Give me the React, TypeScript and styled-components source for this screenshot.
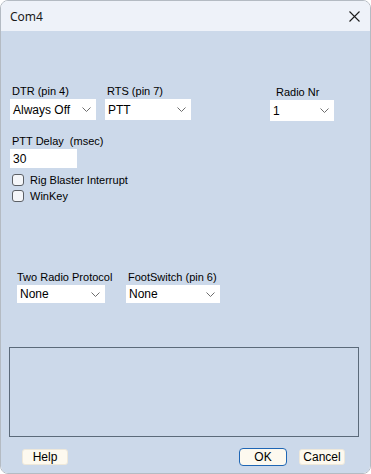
import React from 'react';
import styled, {createGlobalStyle} from 'styled-components';

const GlobalStyle = createGlobalStyle`
    html, body {
        margin: 0;
        padding: 0;
        background: #ffffff;
    }

    * {
        box-sizing: border-box;
    }
`;

type SelectProps = {
    label: string;
    value: string;
    width: number;
    height?: number;
    indent?: number;
};

const Chevron = () => (
    <svg width="9" height="5" viewBox="0 0 9 5">
        <path d="M0.5 0.5 L4.5 4.5 L8.5 0.5" fill="none" stroke="#6d6d6d" strokeWidth="1"/>
    </svg>
);

const CloseIcon = () => (
    <svg width="11" height="11" viewBox="0 0 11 11">
        <path d="M0.5 0.5 L10.5 10.5 M10.5 0.5 L0.5 10.5" stroke="#1c1c1c" strokeWidth="1.1"/>
    </svg>
);

// label on top, fake combo box below
const Dropdown = ({label, value, width, height = 21, indent = 2}: SelectProps) => (
    <Field $width={width}>
        <Label $indent={indent}>{label}</Label>
        <SelectBox $height={height}>
            <span>{value}</span>
            <Chevron/>
        </SelectBox>
    </Field>
);

const CheckItem = ({label}: {label: string}) => (
    <CheckRow>
        <CheckBox/>
        <span>{label}</span>
    </CheckRow>
);

const App = () => (
    <>
        <GlobalStyle/>
        <Window>
            <TitleBar>
                <Title>Com4</Title>
                <CloseButton>
                    <CloseIcon/>
                </CloseButton>
            </TitleBar>

            <Body>
                <TopRow>
                    <Dropdown label="DTR (pin 4)" value="Always Off" width={86}/>
                    <Dropdown label="RTS (pin 7)" value="PTT" width={86}/>
                    <RadioSlot>
                        <Dropdown label="Radio Nr" value="1" width={64} indent={6}/>
                    </RadioSlot>
                </TopRow>

                <DelayField>
                    <Label>PTT Delay&nbsp; (msec)</Label>
                    <DelayInput defaultValue="30"/>
                </DelayField>

                <Checks>
                    <CheckItem label="Rig Blaster Interrupt"/>
                    <CheckItem label="WinKey"/>
                </Checks>

                <BottomRow>
                    <Dropdown label="Two Radio Protocol" value="None" width={88} height={18} indent={0}/>
                    <Dropdown label="FootSwitch (pin 6)" value="None" width={94} height={18}/>
                </BottomRow>

                <GroupBox/>

                <ButtonRow>
                    <Button>Help</Button>
                    <Spacer/>
                    <Button $primary>OK</Button>
                    <Button>Cancel</Button>
                </ButtonRow>
            </Body>
        </Window>
    </>
);

export default App;

const Window = styled.div`
    width: 371px;
    height: 474px;
    display: flex;
    flex-direction: column;
    border: 1px solid #b4bbc3;
    border-radius: 8px;
    overflow: hidden;
    font-family: "Liberation Sans", Arial, sans-serif;
    color: #000;
`;

const TitleBar = styled.div`
    height: 30px;
    flex-shrink: 0;
    display: flex;
    align-items: center;
    justify-content: space-between;
    padding: 0 9px 0 9px;
    background: #eef2f9;
`;

const Title = styled.span`
    font-family: "Noto Sans", "Open Sans", sans-serif;
    font-size: 12px;
    color: #1a1a1a;
`;

const CloseButton = styled.div`
    width: 14px;
    height: 14px;
    display: flex;
    align-items: center;
    justify-content: center;
`;

const Body = styled.div`
    flex: 1;
    display: flex;
    flex-direction: column;
    padding: 54px 11px 0 9px;
    background: #ccd9ea;
`;

const TopRow = styled.div`
    display: flex;
    align-items: flex-start;
    gap: 9px;
`;

const RadioSlot = styled.div`
    margin: 1px 0 -1px 70px;
`;

const BottomRow = styled.div`
    display: flex;
    gap: 21px;
    margin: 68px 0 0 7px;
`;

const Field = styled.div<{$width?: number}>`
    display: flex;
    flex-direction: column;
    gap: 1px;
    width: ${(p) => (p.$width ? `${p.$width}px` : 'auto')};
    flex-shrink: 0;
`;

const DelayField = styled(Field)`
    margin-top: 15px;
`;

const Label = styled.span<{$indent?: number}>`
    font-size: 11px;
    line-height: 13px;
    padding-left: ${(p) => (p.$indent ?? 2)}px;
    white-space: nowrap;
`;

const SelectBox = styled.div<{$height: number}>`
    width: 100%;
    height: ${(p) => p.$height}px;
    display: flex;
    align-items: center;
    justify-content: space-between;
    padding: 0 5px 0 3px;
    background: #ffffff;
    font-size: 12px;
`;

const DelayInput = styled.input`
    width: 67px;
    height: 19px;
    border: none;
    outline: none;
    padding: 0 3px;
    background: #ffffff;
    font-family: "Liberation Sans", Arial, sans-serif;
    font-size: 12px;
    color: #000;
`;

const Checks = styled.div`
    display: flex;
    flex-direction: column;
    gap: 2px;
    margin-top: 5px;
    padding-left: 2px;
`;

const CheckRow = styled.label`
    height: 14px;
    display: flex;
    align-items: center;
    gap: 6px;
    font-size: 11px;
`;

const CheckBox = styled.span`
    width: 12px;
    height: 12px;
    border: 1px solid #5c6066;
    border-radius: 3px;
    background: #f4f6f9;
`;

const GroupBox = styled.div`
    width: 350px;
    height: 90px;
    margin: 44px 0 0 -1px;
    border: 1px solid #5b6a7a;
`;

const ButtonRow = styled.div`
    height: 18px;
    display: flex;
    align-items: center;
    gap: 12px;
    margin-top: 11px;
    padding: 0 14px 0 12px;
`;

const Spacer = styled.div`
    flex: 1;
`;

const Button = styled.button<{$primary?: boolean}>`
    width: ${(p) => (p.$primary ? 48 : 46)}px;
    height: ${(p) => (p.$primary ? 18 : 16)}px;
    padding: 0;
    border: ${(p) => (p.$primary ? '1.5px solid #1f66b5' : '1px solid #eee8da')};
    border-radius: ${(p) => (p.$primary ? 4 : 3)}px;
    background: #fdf9ef;
    font-family: "Liberation Sans", Arial, sans-serif;
    font-size: 12px;
    color: #000;
`;
